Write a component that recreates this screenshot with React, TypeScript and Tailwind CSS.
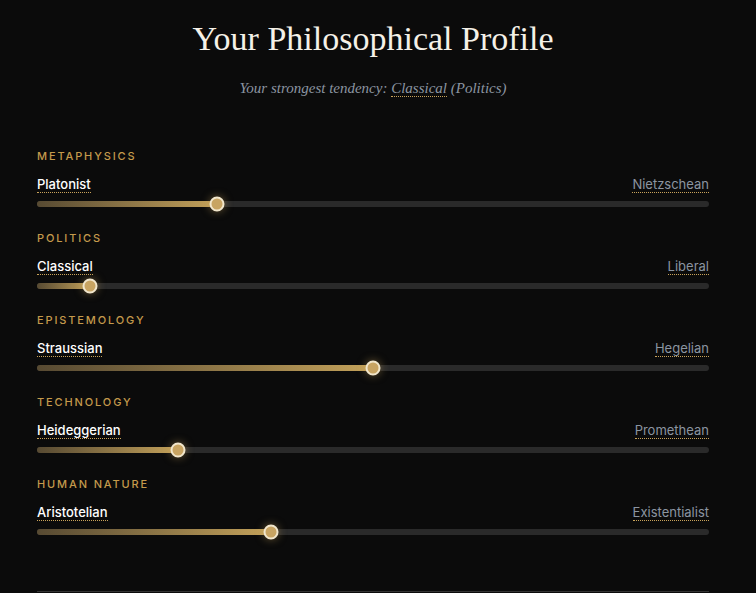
import React from "react";

const axes = [
  { name: "Metaphysics", left: "Platonist", right: "Nietzschean", value: 26.8 },
  { name: "Politics", left: "Classical", right: "Liberal", value: 7.9 },
  { name: "Epistemology", left: "Straussian", right: "Hegelian", value: 50 },
  { name: "Technology", left: "Heideggerian", right: "Promethean", value: 21 },
  { name: "Human Nature", left: "Aristotelian", right: "Existentialist", value: 34.8 },
];

function Axis({ name, left, right, value }: (typeof axes)[number]) {
  return (
    <div className="h-[82px]">
      <div className="text-[11px] font-medium uppercase leading-none tracking-[0.17em] text-[#c49a4c]">
        {name}
      </div>
      <div className="mt-[14px] flex items-center justify-between text-[13px] leading-[16px]">
        <span className="border-b border-dotted border-[#c9a35a] font-medium text-white">{left}</span>
        <span className="border-b border-dotted border-[#c9a35a] text-[#8b95a1]">{right}</span>
      </div>
      <div className="relative mt-[8px] h-[6px] rounded-full bg-[#2a2a2a]">
        <div
          className="h-full rounded-full bg-gradient-to-r from-[#574a32] to-[#c4a25a]"
          style={{ width: `${value}%` }}
        />
        <div
          className="absolute top-1/2 h-[15px] w-[15px] -translate-x-1/2 -translate-y-1/2 rounded-full border-2 border-[#f1e6cc] bg-[#c8a462] shadow-[0_0_8px_rgba(201,163,90,0.5)]"
          style={{ left: `${value}%` }}
        />
      </div>
    </div>
  );
}

export default function App() {
  return (
    <div className="min-h-[593px] bg-[#0b0b0b] font-['Inter',sans-serif]">
      <div className="pl-[37px] pr-[47px] pt-[20px]">
        <h1 className="text-center font-['Liberation_Serif',serif] text-[34px] leading-[38px] text-[#f5f1e8]">
          Your Philosophical Profile
        </h1>
        <p className="mt-[20px] text-center font-['Liberation_Serif',serif] text-[15px] italic leading-[20px] text-[#8b95a1]">
          Your strongest tendency:{" "}
          <span className="border-b border-dotted border-[#c9a35a]">Classical</span> (Politics)
        </p>
        <div className="mt-[53px]">
          {axes.map((a) => (
            <Axis key={a.name} {...a} />
          ))}
        </div>
        <div className="mt-[30px] border-t border-[#333]" />
      </div>
    </div>
  );
}
